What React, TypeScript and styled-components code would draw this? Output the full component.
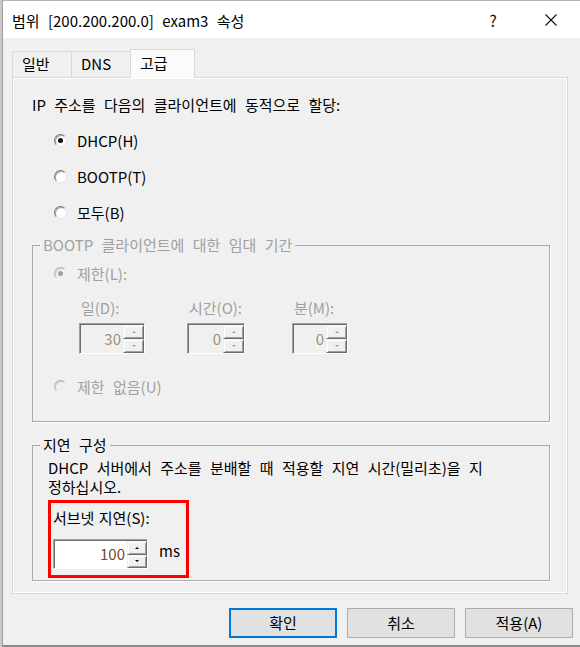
import React from "react";
import styled, { createGlobalStyle, css } from "styled-components";

const GlobalStyle = createGlobalStyle`
  html, body {
    margin: 0;
    padding: 0;
    background: #c9c9c9;
  }
  body {
    font-family: "Noto Sans CJK KR", "Noto Sans", sans-serif;
    font-size: 15px;
    word-spacing: 5px;
    color: #000;
  }
  * {
    box-sizing: border-box;
  }
`;

const Window = styled.div`
  margin-left: 2px;
  width: 578px;
  height: 647px;
  display: flex;
  flex-direction: column;
  background: #f0f0f0;
  border-left: 1px solid #9d9d9d;
  border-top: 1px solid #b4b4b4;
  border-bottom: 2px solid #8a8a8a;
`;

const TitleBar = styled.div`
  height: 37px;
  display: flex;
  align-items: center;
  background: #fff;
  padding-left: 9px;
`;

const Title = styled.div`
  flex: 1;
  line-height: 20px;
  margin-top: 2px;
`;

const CaptionButton = styled.div`
  width: 58px;
  height: 37px;
  display: flex;
  align-items: center;
  justify-content: center;
  font-size: 16px;
  color: #111;
`;

const Body = styled.div`
  flex: 1;
  padding: 11px 0 0 9px;
`;

const TabStrip = styled.div`
  display: flex;
  align-items: flex-end;
  height: 28px;
`;

const Tab = styled.div<{ $active?: boolean; $w: number }>`
  width: ${(p) => p.$w}px;
  height: 26px;
  padding-left: 9px;
  line-height: 24px;
  background: #f0f0f0;
  border: 1px solid #d9d9d9;
  border-bottom: none;
  & + & {
    margin-left: -1px;
  }
  ${(p) =>
    p.$active &&
    css`
      position: relative;
      z-index: 1;
      height: 29px;
      margin-bottom: -1px;
      background: #fbfbfb;
      padding-top: 1px;
    `}
`;

const Panel = styled.div`
  width: 556px;
  height: 517px;
  border: 1px solid #d9d9d9;
  box-shadow: inset 0 0 0 1px #fff;
  padding: 17px 0 0 19px;
`;

const Heading = styled.div`
  line-height: 20px;
`;

const RadioList = styled.div`
  display: flex;
  flex-direction: column;
  gap: 16px;
  margin: 15px 0 13px 22px;
`;

const RadioRow = styled.div<{ $disabled?: boolean; $top?: number }>`
  display: flex;
  align-items: center;
  height: 20px;
  margin-top: ${(p) => p.$top ?? 0}px;
  color: ${(p) => (p.$disabled ? "#a0a0a0" : "#000")};
`;

const RadioCircle = styled.span<{ $checked?: boolean; $disabled?: boolean }>`
  position: relative;
  width: 13px;
  height: 13px;
  margin-right: 10px;
  border-radius: 50%;
  border: 1px solid;
  border-color: ${(p) =>
    p.$disabled ? "#b4b4b4 #f4f4f4 #f4f4f4 #b4b4b4" : "#7a7a7a #e6e6e6 #e6e6e6 #7a7a7a"};
  background: ${(p) => (p.$disabled ? "#f0f0f0" : "#fff")};
  box-shadow: inset 1px 1px 0 ${(p) => (p.$disabled ? "#cfcfcf" : "#a8a8a8")};
  ${(p) =>
    p.$checked &&
    css`
      &::after {
        content: "";
        position: absolute;
        left: 3px;
        top: 3px;
        width: 5px;
        height: 5px;
        border-radius: 50%;
        background: ${p.$disabled ? "#a0a0a0" : "#111"};
      }
    `}
`;

const Group = styled.fieldset<{ $top: number }>`
  width: 518px;
  margin: ${(p) => p.$top}px 0 0 0;
  padding: 0;
  border: 1px solid #a9a9a9;
  box-shadow: 1px 1px 0 #fff;
`;

const Legend = styled.legend<{ $disabled?: boolean }>`
  margin-left: 7px;
  padding: 0 3px;
  line-height: 20px;
  color: ${(p) => (p.$disabled ? "#a0a0a0" : "#000")};
`;

const GroupBody = styled.div<{ $pad: string }>`
  padding: ${(p) => p.$pad};
`;

const SpinGrid = styled.div`
  display: grid;
  grid-template-columns: 108px 105px auto;
  row-gap: 5px;
  margin: 15px 0 0 25px;
`;

const SpinLabel = styled.div`
  padding-left: 2px;
  line-height: 20px;
  color: #a0a0a0;
`;

const SpinBox = styled.div<{ $w: number; $h: number; $disabled?: boolean }>`
  display: flex;
  width: ${(p) => p.$w}px;
  height: ${(p) => p.$h}px;
  border: 1px solid;
  border-color: #a0a0a0 #fff #fff #a0a0a0;
  box-shadow: inset 1px 1px 0 #6e6e6e;
  background: ${(p) => (p.$disabled ? "#f0f0f0" : "#fff")};
`;

const SpinValue = styled.div<{ $disabled?: boolean }>`
  flex: 1;
  align-self: center;
  text-align: right;
  padding-right: 2px;
  line-height: 20px;
  color: ${(p) => (p.$disabled ? "#a48f72" : "#6e4c2c")};
`;

const SpinButtons = styled.div<{ $w: number }>`
  width: ${(p) => p.$w}px;
  display: flex;
  flex-direction: column;
  padding-top: 1px;
`;

const SpinArrow = styled.div<{ $down?: boolean; $disabled?: boolean }>`
  flex: 1;
  display: flex;
  align-items: center;
  justify-content: center;
  background: #f0f0f0;
  border: 1px solid;
  border-color: #f0f0f0 #6e6e6e #6e6e6e #f0f0f0;
  box-shadow: inset 1px 1px 0 #fff, inset -1px -1px 0 #a0a0a0;
  &::after {
    content: "";
    border-left: 2px solid transparent;
    border-right: 2px solid transparent;
    ${(p) =>
      p.$down
        ? css`border-top: 2px solid ${p.$disabled ? "#a0a0a0" : "#000"};`
        : css`border-bottom: 2px solid ${p.$disabled ? "#a0a0a0" : "#000"};`}
  }
`;

const Note = styled.div`
  line-height: 19px;
`;

const Highlight = styled.div`
  width: 141px;
  margin-top: 4px;
  border: 3px solid #f00;
  padding: 5px 0 6px 2px;
`;

const FieldLabel = styled.div`
  line-height: 20px;
  word-spacing: 1px;
`;

const SpinRow = styled.div`
  display: flex;
  align-items: center;
  gap: 11px;
  margin-top: 11px;
`;

const Unit = styled.span`
  line-height: 20px;
  margin-top: -7px;
`;

const ButtonRow = styled.div`
  display: flex;
  justify-content: flex-end;
  gap: 10px;
  margin-top: 14px;
  padding-right: 7px;
`;

const DialogButton = styled.button<{ $default?: boolean }>`
  width: 108px;
  height: 30px;
  font: inherit;
  line-height: 20px;
  color: #000;
  background: #e1e1e1;
  border: 1px solid ${(p) => (p.$default ? "#0078d7" : "#adadad")};
  box-shadow: ${(p) => (p.$default ? "inset 0 0 0 1px #0078d7" : "none")};
  padding: 0;
`;

type SpinProps = { value: string; w: number; h: number; bw: number; disabled?: boolean };

const Spin = ({ value, w, h, bw, disabled }: SpinProps) => (
  <SpinBox $w={w} $h={h} $disabled={disabled}>
    <SpinValue $disabled={disabled}>{value}</SpinValue>
    <SpinButtons $w={bw}>
      <SpinArrow $disabled={disabled} />
      <SpinArrow $down $disabled={disabled} />
    </SpinButtons>
  </SpinBox>
);

const Radio = ({
  label,
  checked,
  disabled,
  top,
}: {
  label: string;
  checked?: boolean;
  disabled?: boolean;
  top?: number;
}) => (
  <RadioRow $disabled={disabled} $top={top}>
    <RadioCircle $checked={checked} $disabled={disabled} />
    {label}
  </RadioRow>
);

const leaseFields = [
  { label: "일(D):", value: "30", w: 66 },
  { label: "시간(O):", value: "0", w: 58 },
  { label: "분(M):", value: "0", w: 56 },
];

export default function App() {
  return (
    <>
      <GlobalStyle />
      <Window>
        <TitleBar>
          <Title>범위 [200.200.200.0] exam3 속성</Title>
          <CaptionButton>?</CaptionButton>
          <CaptionButton>
            <svg width="12" height="12" viewBox="0 0 12 12">
              <path d="M0.5 0.5 L11.5 11.5 M11.5 0.5 L0.5 11.5" stroke="#111" strokeWidth="1.1" />
            </svg>
          </CaptionButton>
        </TitleBar>
        <Body>
          <TabStrip>
            <Tab $w={60}>일반</Tab>
            <Tab $w={60}>DNS</Tab>
            <Tab $w={65} $active>
              고급
            </Tab>
          </TabStrip>
          <Panel>
            <Heading>IP 주소를 다음의 클라이언트에 동적으로 할당:</Heading>
            <RadioList>
              <Radio label="DHCP(H)" checked />
              <Radio label="BOOTP(T)" />
              <Radio label="모두(B)" />
            </RadioList>

            <Group $top={0}>
              <Legend $disabled>BOOTP 클라이언트에 대한 임대 기간</Legend>
              <GroupBody $pad="8px 0 25px 21px">
                <Radio label="제한(L):" checked disabled />
                <SpinGrid>
                  {leaseFields.map((f) => (
                    <SpinLabel key={f.label}>{f.label}</SpinLabel>
                  ))}
                  {leaseFields.map((f) => (
                    <Spin key={f.label} value={f.value} w={f.w} h={31} bw={21} disabled />
                  ))}
                </SpinGrid>
                <Radio label="제한 없음(U)" disabled top={22} />
              </GroupBody>
            </Group>

            <Group $top={13}>
              <Legend>지연 구성</Legend>
              <GroupBody $pad="3px 0 2px 15px">
                <Note>
                  DHCP 서버에서 주소를 분배할 때 적용할 지연 시간(밀리초)을 지
                  <br />
                  정하십시오.
                </Note>
                <Highlight>
                  <FieldLabel>서브넷 지연(S):</FieldLabel>
                  <SpinRow>
                    <Spin value="100" w={95} h={30} bw={20} />
                    <Unit>ms</Unit>
                  </SpinRow>
                </Highlight>
              </GroupBody>
            </Group>
          </Panel>
          <ButtonRow>
            <DialogButton $default>확인</DialogButton>
            <DialogButton>취소</DialogButton>
            <DialogButton>적용(A)</DialogButton>
          </ButtonRow>
        </Body>
      </Window>
    </>
  );
}
